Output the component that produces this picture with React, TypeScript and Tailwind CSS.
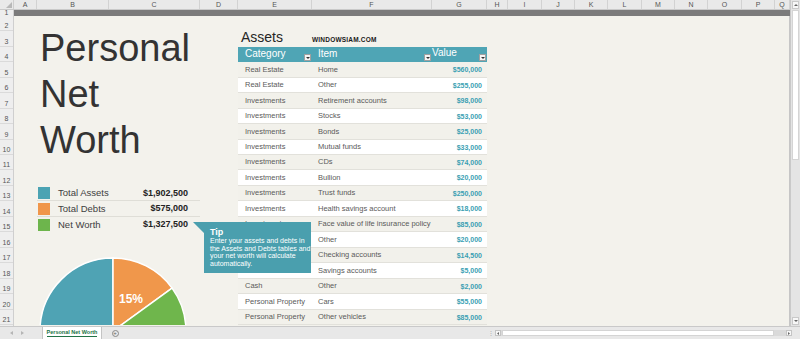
import React from 'react'

const cols = [
  { l: 'A', w: 'w-[23px]' },
  { l: 'B', w: 'w-[72px]' },
  { l: 'C', w: 'w-[91px]' },
  { l: 'D', w: 'w-[38px]' },
  { l: 'E', w: 'w-[74px]' },
  { l: 'F', w: 'w-[120px]' },
  { l: 'G', w: 'w-[55px]' },
  { l: 'H', w: 'w-[21px]' },
  { l: 'I', w: 'w-[34px]' },
  { l: 'J', w: 'w-[33px]' },
  { l: 'K', w: 'w-[33px]' },
  { l: 'L', w: 'w-[34px]' },
  { l: 'M', w: 'w-[33px]' },
  { l: 'N', w: 'w-[33px]' },
  { l: 'O', w: 'w-[34px]' },
  { l: 'P', w: 'w-[33px]' },
  { l: 'Q', w: 'w-[15px]' },
]

// heights of rows 2..21 (index 0 = row 2)
const RH = [
  'h-[15px]', 'h-[16px]', 'h-[15px]', 'h-[16px]', 'h-[15px]',
  'h-[16px]', 'h-[15px]', 'h-[16px]', 'h-[15px]', 'h-[15px]',
  'h-[16px]', 'h-[15px]', 'h-[16px]', 'h-[15px]', 'h-[16px]',
  'h-[15px]', 'h-[16px]', 'h-[15px]', 'h-[16px]', 'h-[15px]',
]

// rows 16-18 sit under the tip callout, so their category cells stay blank
const assets = [
  { cat: 'Real Estate', item: 'Home', value: '$560,000' },
  { cat: 'Real Estate', item: 'Other', value: '$255,000' },
  { cat: 'Investments', item: 'Retirement accounts', value: '$98,000' },
  { cat: 'Investments', item: 'Stocks', value: '$53,000' },
  { cat: 'Investments', item: 'Bonds', value: '$25,000' },
  { cat: 'Investments', item: 'Mutual funds', value: '$33,000' },
  { cat: 'Investments', item: 'CDs', value: '$74,000' },
  { cat: 'Investments', item: 'Bullion', value: '$20,000' },
  { cat: 'Investments', item: 'Trust funds', value: '$250,000' },
  { cat: 'Investments', item: 'Health savings account', value: '$18,000' },
  { cat: 'Investments', item: 'Face value of life insurance policy', value: '$85,000' },
  { cat: '', item: 'Other', value: '$20,000' },
  { cat: '', item: 'Checking accounts', value: '$14,500' },
  { cat: '', item: 'Savings accounts', value: '$5,000' },
  { cat: 'Cash', item: 'Other', value: '$2,000' },
  { cat: 'Personal Property', item: 'Cars', value: '$55,000' },
  { cat: 'Personal Property', item: 'Other vehicles', value: '$85,000' },
]

const summary = [
  { label: 'Total Assets', value: '$1,902,500', color: 'bg-[#4ba3b3]', h: 'h-[15px]' },
  { label: 'Total Debts', value: '$575,000', color: 'bg-[#f0964a]', h: 'h-[16px]' },
  { label: 'Net Worth', value: '$1,327,500', color: 'bg-[#6db54c]', h: 'h-[15px]' },
]

function FilterButton() {
  return (
    <span className="flex h-[7px] w-[7px] shrink-0 items-center justify-center border border-[#a0a0a0] bg-[#f4f4f4]">
      <svg viewBox="0 0 4 2" className="h-[2px] w-[4px]">
        <path d="M0 0h4L2 2z" fill="#333" />
      </svg>
    </span>
  )
}

function Pie() {
  return (
    <svg width="224" height="93" viewBox="0 0 224 93" className="block">
      <path d="M99 99 L99 172 A73 73 0 0 1 99 26 Z" fill="#4fa3b4" stroke="#fff" strokeWidth="1.5" />
      <path d="M99 99 L99 26 A73 73 0 0 1 158.06 56.09 Z" fill="#f0974b" stroke="#fff" strokeWidth="1.5" />
      <path d="M99 99 L158.06 56.09 A73 73 0 0 1 99 172 Z" fill="#6fb64c" stroke="#fff" strokeWidth="1.5" />
      <text x="105" y="71" fill="#fff" fontSize="12" fontWeight="700" fontFamily="Liberation Sans, Arial, sans-serif">
        15%
      </text>
    </svg>
  )
}

export default function App() {
  return (
    <div className="relative flex h-[339px] w-[800px] flex-col overflow-hidden bg-[#f3f2ec] font-['Liberation_Sans',Arial,sans-serif]">
      <div className="flex h-[326px]">
        <div className="flex w-[790px] flex-col">
          {/* Column headers */}
          <div className="flex h-[10px] border-b border-[#c9c9c9] bg-[#e9e9e9]">
            <div className="relative w-[14px] border-r border-[#cfcfcf]">
              <svg viewBox="0 0 6 6" className="absolute right-[1px] bottom-[1px] h-[6px] w-[6px]">
                <path d="M6 0V6H0z" fill="#b8b8b8" />
              </svg>
            </div>
            {cols.map(c => (
              <div
                key={c.l}
                className={`${c.w} flex items-center justify-center border-r border-[#d2d2d2] text-[7px] leading-none text-[#555]`}
              >
                {c.l}
              </div>
            ))}
          </div>

          {/* Row 1 */}
          <div className="flex h-[6px]">
            <div className="flex w-[14px] items-end justify-center overflow-hidden border-r border-[#cfcfcf] bg-[#eeeeee] text-[7px] leading-[7px] text-[#555]">
              1
            </div>
            <div className="flex-1 bg-[#7b7b7b]" />
          </div>

          <div className="flex min-h-0 flex-1">
            {/* Row headers */}
            <div className="flex w-[14px] flex-col border-r border-[#cfcfcf] bg-[#eeeeee]">
              {RH.map((h, i) => (
                <div
                  key={i}
                  className={`${h} flex items-end justify-center border-b border-[#dadada] pb-[1px] text-[7px] leading-[7px] text-[#555]`}
                >
                  {i + 2}
                </div>
              ))}
            </div>

            {/* Sheet */}
            <div className="flex flex-1 overflow-hidden border-r border-[#c6c6c6]">
              {/* Columns A-D */}
              <div className="flex w-[224px] flex-col">
                <div className="h-[170px] pt-[9px] pl-[26px] text-[38px] leading-[46px] text-[#333]">
                  <div>Personal</div>
                  <div>Net</div>
                  <div>Worth</div>
                </div>
                <div className="ml-[23px] flex w-[163px] flex-col">
                  {summary.map((s, i) => (
                    <div
                      key={s.label}
                      className={`${s.h} flex items-center ${i < 2 ? 'border-b border-[#dfded7]' : ''}`}
                    >
                      <span className={`ml-[1px] h-[12px] w-[12px] ${s.color}`} />
                      <span className="ml-[8px] flex-1 text-[9.5px] leading-none text-[#404040]">{s.label}</span>
                      <span className="mr-[12px] text-[9px] font-bold leading-none text-[#222]">{s.value}</span>
                    </div>
                  ))}
                </div>
                <div className="h-[93px]">
                  <Pie />
                </div>
              </div>

              {/* Columns E-G: Assets table */}
              <div className="flex w-[249px] flex-col">
                <div className="h-[15px]" />
                <div className="flex h-[16px] items-end pb-[3px]">
                  <span className="w-[74px] pl-[3px] text-[14px] leading-none text-[#262626]">Assets</span>
                  <span className="pb-[1px] text-[6.5px] font-bold leading-none tracking-[0.2px] text-[#1a1a1a]">
                    WINDOWSIAM.COM
                  </span>
                </div>
                <div className="flex h-[15px] bg-[#4fa5b5] text-[10px] leading-none text-white">
                  <div className="flex w-[74px] items-end justify-between pr-[1px] pb-[1px] pl-[7px]">
                    <span className="self-center pb-[1px]">Category</span>
                    <FilterButton />
                  </div>
                  <div className="flex w-[120px] items-end justify-between pr-[1px] pb-[1px] pl-[6px]">
                    <span className="self-center pb-[1px]">Item</span>
                    <FilterButton />
                  </div>
                  <div className="flex w-[55px] items-end justify-between pr-[1px] pb-[1px]">
                    <span className="self-center pb-[2px]">Value</span>
                    <FilterButton />
                  </div>
                </div>
                {assets.map((a, i) => (
                  <div
                    key={i}
                    className={`${RH[i + 3]} flex items-center border-b border-[#e2e1db] text-[7.5px] leading-none ${
                      i % 2 === 0 ? 'bg-[#f2f1eb]' : 'bg-white'
                    }`}
                  >
                    <span className="w-[74px] pl-[7px] text-[#5a5a5a]">{a.cat}</span>
                    <span className="w-[120px] pl-[6px] whitespace-nowrap text-[#5a5a5a]">{a.item}</span>
                    <span className="w-[55px] pr-[5px] text-right text-[7px] font-bold text-[#3a9fb3]">{a.value}</span>
                  </div>
                ))}
              </div>
              <div className="flex-1" />
            </div>
          </div>
        </div>

        {/* Vertical scrollbar */}
        <div className="flex w-[10px] flex-col border-l border-[#c9c9c9] bg-[#e4e4e4] px-[1px]">
          <div className="mt-[1px] flex h-[8px] items-center justify-center border border-[#c9c9c9] bg-[#f7f7f7]">
            <svg viewBox="0 0 4 2" className="h-[2px] w-[4px]"><path d="M0 2h4L2 0z" fill="#666" /></svg>
          </div>
          <div className="mt-[1px] h-[150px] border border-[#d4d4d4] bg-white" />
          <div className="flex-1" />
          <div className="mb-[1px] flex h-[8px] items-center justify-center border border-[#c9c9c9] bg-[#f7f7f7]">
            <svg viewBox="0 0 4 2" className="h-[2px] w-[4px]"><path d="M0 0h4L2 2z" fill="#666" /></svg>
          </div>
        </div>
      </div>

      {/* Sheet tabs + horizontal scrollbar */}
      <div className="flex h-[13px] items-stretch border-t border-[#c9c9c9] bg-[#e8e8e8]">
        <div className="flex w-[42px] items-center gap-[8px] pl-[10px]">
          <svg viewBox="0 0 3 4" className="h-[4px] w-[3px]"><path d="M3 0v4L0 2z" fill="#b5b5b5" /></svg>
          <svg viewBox="0 0 3 4" className="h-[4px] w-[3px]"><path d="M0 0v4l3-2z" fill="#b5b5b5" /></svg>
        </div>
        <div className="flex w-[60px] items-center justify-center border-x border-[#c4c4c4] bg-white">
          <span className="border-b border-[#217346] text-[5.5px] font-bold leading-[7px] text-[#217346]">
            Personal Net Worth
          </span>
        </div>
        <div className="flex w-[26px] items-center justify-center">
          <span className="flex h-[7px] w-[7px] items-center justify-center rounded-full border border-[#888] text-[6px] leading-none text-[#666]">
            +
          </span>
        </div>
        <div className="flex-1" />
        <div className="flex w-[6px] items-center justify-center text-[6px] leading-none text-[#aaa]">⋮</div>
        <div className="flex w-[306px] items-center pr-[8px] pl-[1px]">
          <div className="flex h-[6px] w-full items-stretch bg-[#dadada]">
            <div className="flex w-[6px] items-center justify-center border border-[#c4c4c4] bg-[#f7f7f7]">
              <svg viewBox="0 0 2 3" className="h-[3px] w-[2px]"><path d="M2 0v3L0 1.5z" fill="#666" /></svg>
            </div>
            <div className="ml-[1px] w-[272px] border border-[#d4d4d4] bg-white" />
            <div className="flex-1" />
            <div className="flex w-[6px] items-center justify-center border border-[#c4c4c4] bg-[#f7f7f7]">
              <svg viewBox="0 0 2 3" className="h-[3px] w-[2px]"><path d="M0 0v3l2-1.5z" fill="#666" /></svg>
            </div>
          </div>
        </div>
      </div>

      {/* Tip callout */}
      <div className="absolute top-[222px] left-[193px] h-[51px] w-[118px]">
        <svg width="118" height="51" viewBox="0 0 118 51" className="absolute inset-0">
          <path d="M0 0H118V51H11V11Z" fill="#4a9fae" />
        </svg>
        <div className="relative flex flex-col pt-[5px] pl-[17px] text-white">
          <span className="text-[9px] leading-[10px] font-bold">Tip</span>
          <span className="text-[7px] leading-[7.5px]">
            Enter your assets and debts in
            <br />
            the Assets and Debts tables and
            <br />
            your net worth will calculate
            <br />
            automatically.
          </span>
        </div>
      </div>
    </div>
  )
}
